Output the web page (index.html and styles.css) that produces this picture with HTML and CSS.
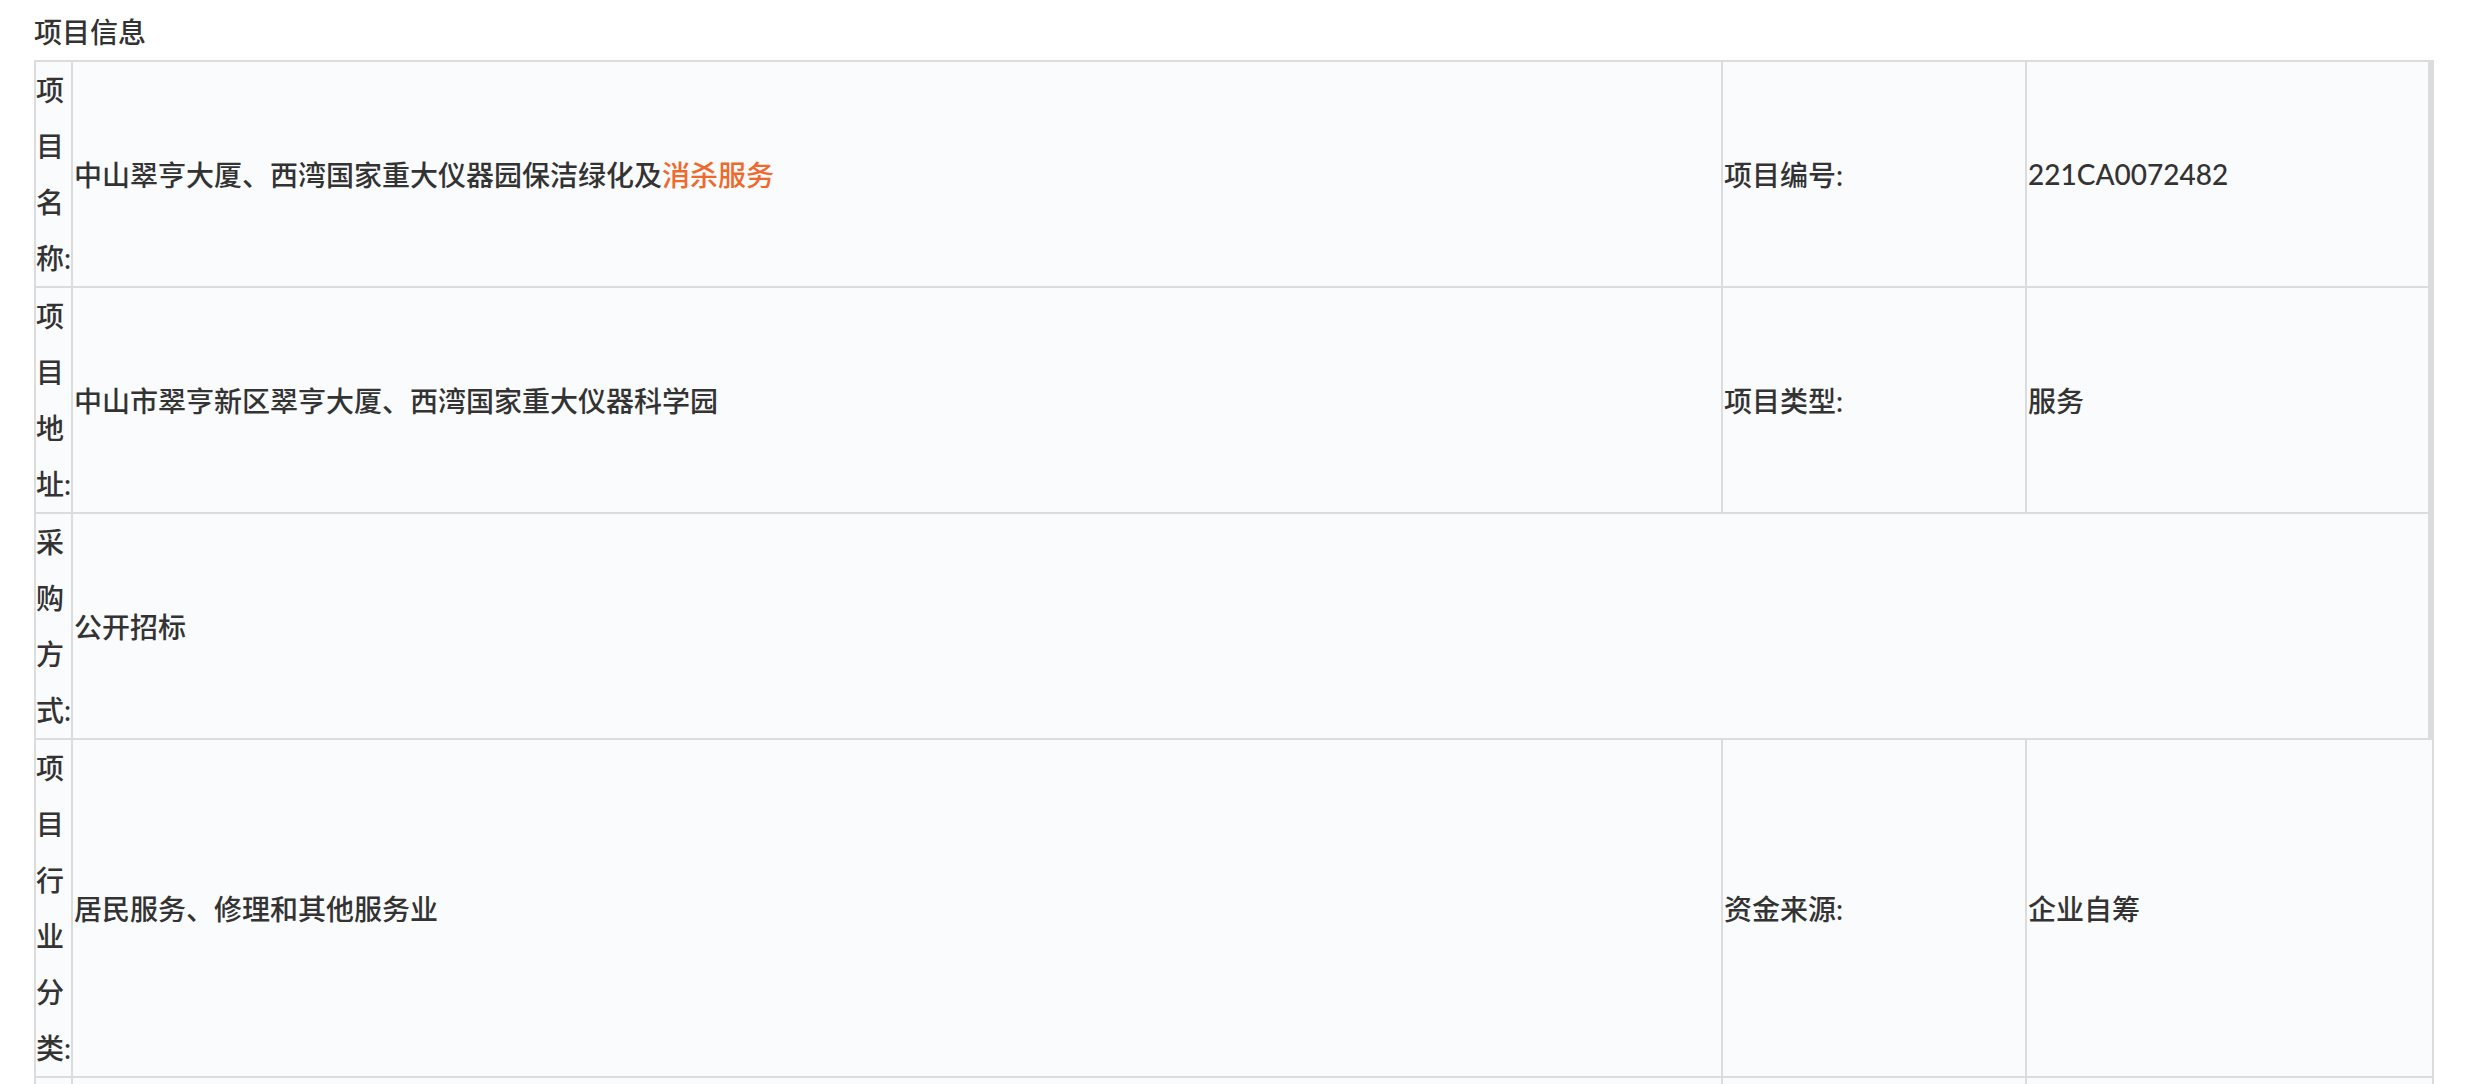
FILE: index.html
```html
<!DOCTYPE html>
<html lang="zh-CN">
<head>
    <meta charset="UTF-8">
    <meta name="viewport" content="width=device-width, initial-scale=1.0">
    <title>项目信息</title>
    <link rel="stylesheet" href="styles.css">
</head>
<body>
    <div class="panel">
        <h3 class="panel-title">项目信息</h3>
        <table class="info-table">
            <tr>
                <td class="label">项目名称:</td>
                <td class="value name">中山翠亨大厦、西湾国家重大仪器园保洁绿化及<span class="hl">消杀服务</span></td>
                <td class="sub-label">项目编号:</td>
                <td class="value last">221CA0072482</td>
            </tr>
            <tr>
                <td class="label">项目地址:</td>
                <td class="value">中山市翠亨新区翠亨大厦、西湾国家重大仪器科学园</td>
                <td class="sub-label">项目类型:</td>
                <td class="value last">服务</td>
            </tr>
            <tr>
                <td class="label">采购方式:</td>
                <td class="value last" colspan="3">公开招标</td>
            </tr>
            <tr>
                <td class="label">项目行业分类:</td>
                <td class="value">居民服务、修理和其他服务业</td>
                <td class="sub-label">资金来源:</td>
                <td class="value">企业自筹</td>
            </tr>
            <tr class="more">
                <td class="label"></td>
                <td class="value"></td>
                <td class="sub-label"></td>
                <td class="value"></td>
            </tr>
        </table>
    </div>
</body>
</html>
```

FILE: styles.css
```css
body {
    margin: 0;
    background-color: #ffffff;
    color: #333;
    font-family: "Century Gothic", Lato, "Noto Sans CJK SC", sans-serif;
}

.panel {
    padding: 12px 0 0 34px;
}

.panel-title {
    margin: 0 0 8px 0;
    font-size: 28px;
    line-height: 40px;
    font-weight: 500;
}

.info-table {
    width: 2400px;
    table-layout: fixed;
    border-collapse: separate;
    border-spacing: 0;
    border: 1px solid #dcdcdc;
    font-size: 28px;
    font-weight: 500;
}

.info-table td {
    box-sizing: border-box;
    border: 1px solid #dcdcdc;
    background-color: #fafbfd;
    padding: 0 1px;
    vertical-align: middle;
    text-align: left;
}

.info-table td.label {
    width: 37px;
    padding: 0;
    line-height: 56px;
}

.info-table td.name {
    width: 1650px;
}

.info-table td.sub-label {
    width: 304px;
}

.info-table td.last {
    border-right-width: 5px;
}

.info-table tr.more td {
    height: 120px;
}

.hl {
    color: #f0692c;
}
```
